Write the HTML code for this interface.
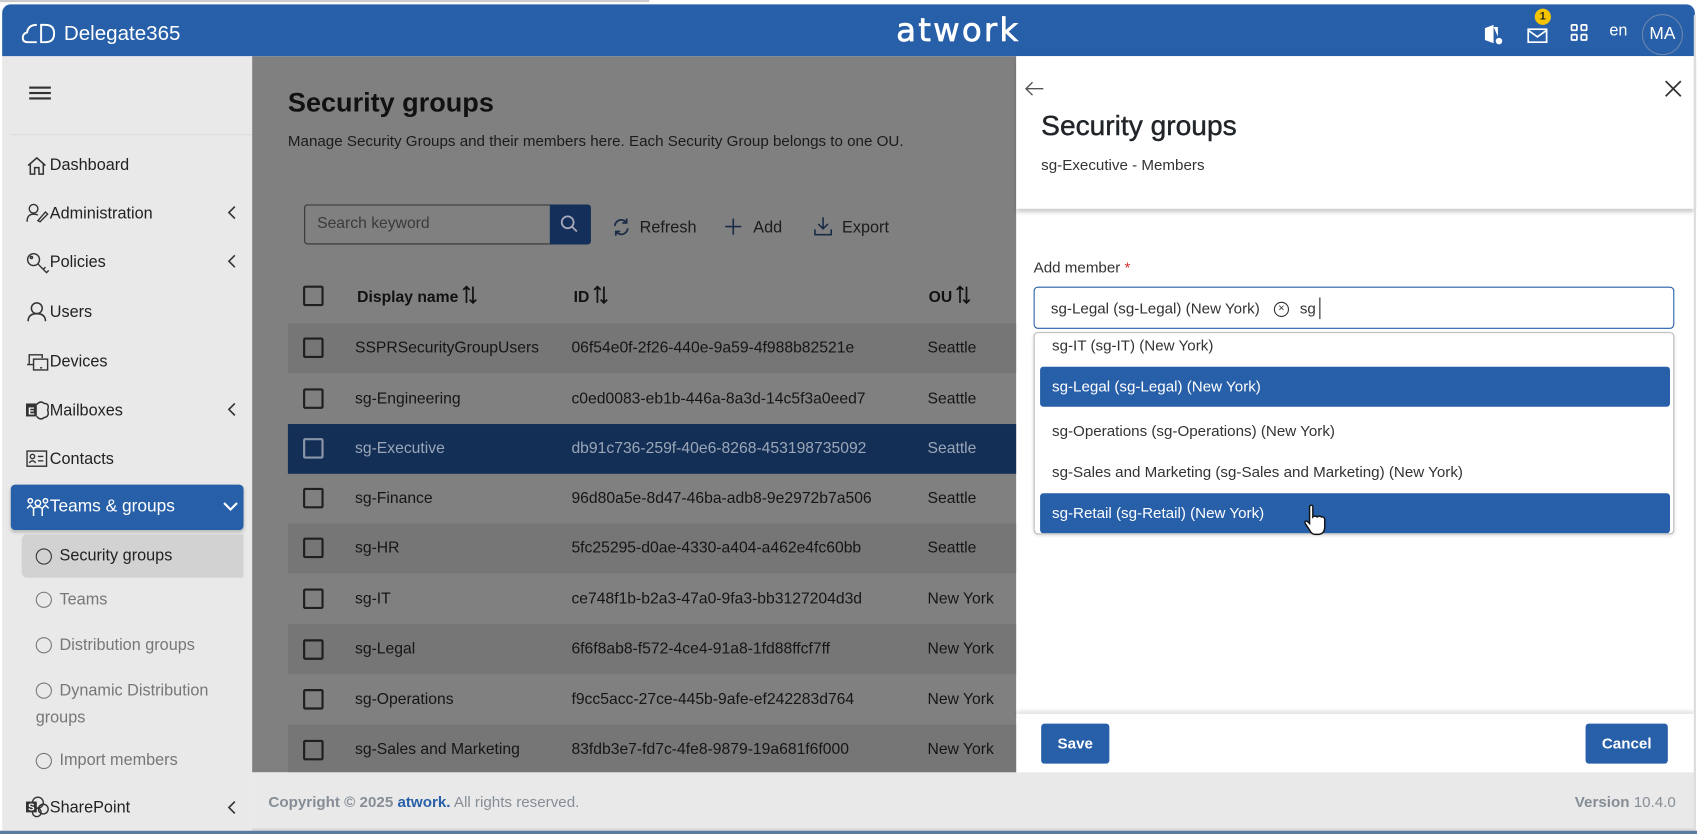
<!DOCTYPE html>
<html><head><meta charset="utf-8">
<style>
*{box-sizing:border-box;margin:0;padding:0}
html,body{width:1697px;height:834px;overflow:hidden;background:#fff}
#w{position:absolute;left:0;top:0;width:1568px;height:771px;transform:scale(1.0823,1.0817);transform-origin:0 0;font-family:"Liberation Sans",sans-serif;color:#212529;background:#fff}
.a{position:absolute;white-space:nowrap}
.hdr{left:2px;top:4px;width:1564px;height:48px;background:#275fa8;border-radius:8px 8px 0 0}
.side{left:2px;top:52px;width:231px;height:716px;background:#e9e9e9}
.main{left:233px;top:52px;width:706px;height:662px;background:#808080}
.foot{left:233px;top:714px;width:1333px;height:54px;background:#e9e9e9;border-bottom:2px solid #d7d7d7}
.nav{font-size:15px;color:#222;left:46px}
.ic{position:absolute;left:24px}
.chev{position:absolute;left:210px}
.row{position:absolute;left:266px;width:673px;height:46px;font-size:14.5px;color:#151515}
.row span{position:absolute;top:15px}
.cb{position:absolute;left:280px;width:19px;height:19px;border:2px solid #1f1f1f;border-radius:2px}
.panel{left:939px;top:52px;width:626px;height:662px;background:#fff}
.opt{position:absolute;left:5px;width:582px;height:37px;font-size:14px;padding:10px 11px;color:#333}
.opt.s{background:#275fa8;color:#fff;border-radius:3px}
.btn{position:absolute;background:#275fa8;color:#fff;font-weight:bold;font-size:14px;border-radius:3px;text-align:center;line-height:36px}
.srt{display:inline-block;vertical-align:-2px;margin-left:3px}
</style></head><body><div id="w">
<div class="a" style="left:0;top:0;width:600px;height:2px;background:#ccc"></div>
<div class="a hdr"></div>
<svg class="a" style="left:20px;top:21px" width="32" height="20" viewBox="0 0 32 20"><path d="M14 2 Q6 2 5 9 Q1 10 1 14 Q1 18 6 18 H14" fill="none" stroke="#fff" stroke-width="1.8"/><path d="M18 2 H22 Q30 2 30 10 Q30 18 22 18 H18 Z" fill="none" stroke="#fff" stroke-width="1.8"/></svg>
<div class="a" style="left:59px;top:21px;font-size:19px;color:#fff">Delegate365</div>
<div class="a" style="left:828px;top:11px;font-family:'DejaVu Sans',sans-serif;font-size:30px;color:#fff;letter-spacing:2px;-webkit-text-stroke:0.6px #fff">atwork</div>
<svg class="a" style="left:1369px;top:22px" width="20" height="20" viewBox="0 0 20 20"><path d="M3 4 L11 1 V18 L3 15 Z M11 3 H15 V12" fill="#fff"/><circle cx="16" cy="16" r="3" fill="#fff"/></svg>
<svg class="a" style="left:1411px;top:26px" width="19" height="14" viewBox="0 0 19 14"><rect x="1" y="1" width="17" height="12" fill="none" stroke="#fff" stroke-width="1.6"/><path d="M1 2 L9.5 8 L18 2" fill="none" stroke="#fff" stroke-width="1.6"/></svg>
<div class="a" style="left:1418px;top:8px;width:15px;height:15px;border-radius:50%;background:#f5c400;color:#222;font-size:10px;font-weight:bold;text-align:center;line-height:15px">1</div>
<svg class="a" style="left:1451px;top:22px" width="16" height="16" viewBox="0 0 16 16" fill="none" stroke="#fff" stroke-width="1.6"><rect x="1" y="1" width="5" height="5" rx="1"/><rect x="10" y="1" width="5" height="5" rx="1"/><rect x="1" y="10" width="5" height="5" rx="1"/><rect x="10" y="10" width="5" height="5" rx="1"/></svg>
<div class="a" style="left:1487px;top:20px;font-size:15px;color:#fff">en</div>
<div class="a" style="left:1517px;top:13px;width:38px;height:38px;border-radius:50%;border:1px solid #6b86ad;color:#fff;font-size:16px;text-align:center;line-height:36px">MA</div>

<div class="a side"></div>
<div class="a" style="left:27px;top:80px;width:20px;height:2px;background:#333;box-shadow:0 5px 0 #333,0 10px 0 #333"></div>
<div class="a" style="left:10px;top:124px;width:234px;height:1px;background:#ddd"></div>
<svg class="ic" style="top:144px" width="20" height="18" viewBox="0 0 20 18" fill="none" stroke="#333" stroke-width="1.4"><path d="M2 9 L10 2 L18 9 M4 7 V17 H8 V11 H12 V17 H16 V7"/></svg>
<div class="a nav" style="top:144px">Dashboard</div>
<svg class="ic" style="top:188px" width="22" height="18" viewBox="0 0 22 18" fill="none" stroke="#333" stroke-width="1.3"><circle cx="7" cy="5" r="4"/><path d="M1 17 Q1 10 7 10 Q10 10 11 11 M11 16 L18 8 L20 10 L13 17 Z"/></svg>
<div class="a nav" style="top:189px">Administration</div>
<svg class="chev" style="top:190px" width="8" height="13" viewBox="0 0 8 13"><path d="M7 1 L1.5 6.5 L7 12" fill="none" stroke="#333" stroke-width="1.5"/></svg>
<svg class="ic" style="top:233px" width="22" height="20" viewBox="0 0 22 20" fill="none" stroke="#333" stroke-width="1.3"><circle cx="7" cy="7" r="5.5"/><circle cx="5" cy="5" r="1"/><path d="M11 11 L19 19 L21 17 M16 16 L18 14"/></svg>
<div class="a nav" style="top:234px">Policies</div>
<svg class="chev" style="top:235px" width="8" height="13" viewBox="0 0 8 13"><path d="M7 1 L1.5 6.5 L7 12" fill="none" stroke="#333" stroke-width="1.5"/></svg>
<svg class="ic" style="top:279px" width="20" height="19" viewBox="0 0 20 19" fill="none" stroke="#333" stroke-width="1.4"><circle cx="10" cy="6" r="5"/><path d="M2 18 Q2 11 10 11 Q18 11 18 18"/></svg>
<div class="a nav" style="top:280px">Users</div>
<svg class="ic" style="top:326px" width="22" height="17" viewBox="0 0 22 17" fill="none" stroke="#333" stroke-width="1.3"><path d="M3 11 V2 H15 V5 M1 11 H7"/><rect x="7" y="6" width="13" height="10"/><path d="M13 14 H15"/></svg>
<div class="a nav" style="top:326px">Devices</div>
<svg class="ic" style="top:370px" width="22" height="19" viewBox="0 0 22 19"><path d="M10 4 Q13 0 17 3 Q22 3 20 9 Q22 15 17 16 Q13 19 10 15" fill="none" stroke="#333" stroke-width="1.4"/><rect x="0" y="3" width="10" height="12" fill="#333"/><text x="2" y="13" font-size="9" fill="#fff" font-family="Liberation Sans" font-weight="bold">E</text></svg>
<div class="a nav" style="top:371px">Mailboxes</div>
<svg class="chev" style="top:372px" width="8" height="13" viewBox="0 0 8 13"><path d="M7 1 L1.5 6.5 L7 12" fill="none" stroke="#333" stroke-width="1.5"/></svg>
<svg class="ic" style="top:416px" width="20" height="16" viewBox="0 0 20 16" fill="none" stroke="#333" stroke-width="1.3"><rect x="1" y="1" width="18" height="14"/><circle cx="6" cy="6" r="2"/><path d="M3 12 Q6 8 9 12 M11 6 H16 M11 10 H16"/></svg>
<div class="a nav" style="top:416px">Contacts</div>
<div class="a" style="left:10px;top:448px;width:215px;height:42px;background:#275fa8;border-radius:4px;box-shadow:0 2px 3px rgba(0,0,0,.2)"></div>
<svg class="a" style="left:24px;top:460px" width="22" height="18" viewBox="0 0 22 18" fill="none" stroke="#fff" stroke-width="1.4"><circle cx="4" cy="3" r="2"/><circle cx="11" cy="5" r="2.5"/><circle cx="18" cy="3" r="2"/><path d="M1 10 L4 7 L7 10 M7 17 V10 Q11 7 15 10 V17 M15 10 L18 7 L21 10"/></svg>
<div class="a" style="left:46px;top:460px;font-size:16px;color:#fff">Teams &amp; groups</div>
<svg class="a" style="left:206px;top:464px" width="14" height="9" viewBox="0 0 14 9"><path d="M1 1 L7 7 L13 1" fill="none" stroke="#fff" stroke-width="2"/></svg>
<div class="a" style="left:20px;top:494px;width:205px;height:40px;background:#d2d2d2;border-radius:5px 0 0 5px"></div>
<div class="a" style="left:33px;top:507px;width:15px;height:15px;border:1.5px solid #333;border-radius:50%"></div>
<div class="a" style="left:55px;top:505px;font-size:15px;color:#222">Security groups</div>
<div class="a" style="left:33px;top:547px;width:15px;height:15px;border:1.5px solid #777;border-radius:50%"></div>
<div class="a" style="left:55px;top:546px;font-size:15px;color:#777">Teams</div>
<div class="a" style="left:33px;top:589px;width:15px;height:15px;border:1.5px solid #777;border-radius:50%"></div>
<div class="a" style="left:55px;top:588px;font-size:15px;color:#777">Distribution groups</div>
<div class="a" style="left:33px;top:631px;width:15px;height:15px;border:1.5px solid #777;border-radius:50%"></div>
<div class="a" style="left:55px;top:630px;font-size:15px;color:#777">Dynamic Distribution</div>
<div class="a" style="left:33px;top:655px;font-size:15px;color:#777">groups</div>
<div class="a" style="left:33px;top:696px;width:15px;height:15px;border:1.5px solid #777;border-radius:50%"></div>
<div class="a" style="left:55px;top:694px;font-size:15px;color:#777">Import members</div>
<svg class="ic" style="top:736px" width="22" height="20" viewBox="0 0 22 20"><circle cx="11" cy="6" r="5" fill="none" stroke="#333" stroke-width="1.3"/><circle cx="16" cy="12" r="4.5" fill="none" stroke="#333" stroke-width="1.3"/><circle cx="10" cy="15" r="4" fill="none" stroke="#333" stroke-width="1.3"/><rect x="0" y="5" width="10" height="10" fill="#333"/><text x="2" y="13.5" font-size="9" fill="#fff" font-family="Liberation Sans" font-weight="bold">S</text></svg>
<div class="a nav" style="top:738px">SharePoint</div>
<svg class="chev" style="top:740px" width="8" height="13" viewBox="0 0 8 13"><path d="M7 1 L1.5 6.5 L7 12" fill="none" stroke="#333" stroke-width="1.5"/></svg>

<div class="a main"></div>
<div class="a" style="left:266px;top:81px;font-size:25px;font-weight:bold;color:#111">Security groups</div>
<div class="a" style="left:266px;top:122px;font-size:14px;color:#1b1b1b">Manage Security Groups and their members here. Each Security Group belongs to one OU.</div>
<div class="a" style="left:281px;top:189px;width:264px;height:37px;border:1px solid #333;border-radius:3px"></div>
<div class="a" style="left:293px;top:199px;font-size:14.5px;color:#3a3a3a">Search keyword</div>
<div class="a" style="left:508px;top:189px;width:38px;height:37px;background:#14305a;border-radius:0 3px 3px 0"></div>
<svg class="a" style="left:517px;top:198px" width="18" height="18" viewBox="0 0 18 18" fill="none" stroke="#aab" stroke-width="1.6"><circle cx="7.5" cy="7.5" r="5.5"/><path d="M11.5 11.5 L16 16"/></svg>
<svg class="a" style="left:566px;top:201px" width="16" height="18" viewBox="0 0 16 18" fill="none" stroke="#1a2b45" stroke-width="1.6"><path d="M2 8 A6 6 0 0 1 13 5 M13 1 V5 H9 M14 10 A6 6 0 0 1 3 13 M3 17 V13 H7"/></svg>
<div class="a" style="left:591px;top:202px;font-size:15px;color:#1b1b1b">Refresh</div>
<svg class="a" style="left:670px;top:202px" width="15" height="15" viewBox="0 0 15 15" stroke="#1a2b45" stroke-width="1.5"><path d="M7.5 0 V15 M0 7.5 H15"/></svg>
<div class="a" style="left:696px;top:202px;font-size:15px;color:#1b1b1b">Add</div>
<svg class="a" style="left:752px;top:200px" width="17" height="18" viewBox="0 0 17 18" fill="none" stroke="#1a2b45" stroke-width="1.5"><path d="M8.5 1 V11 M4 7 L8.5 11.5 L13 7 M1 12 V17 H16 V12"/></svg>
<div class="a" style="left:778px;top:202px;font-size:15px;color:#1b1b1b">Export</div>
<div class="cb" style="top:264px"></div>
<svg width="0" height="0" style="position:absolute"><defs><symbol id="so" viewBox="0 0 14 17"><path d="M4 16 V1 M1 4 L4 1 L7 4 M10 1 V16 M7 13 L10 16 L13 13" fill="none" stroke="#111" stroke-width="1.6"/></symbol></defs></svg>
<div class="a" style="left:330px;top:264px;font-size:14.5px;font-weight:bold;color:#111">Display name<svg class="srt" width="14" height="17"><use href="#so"/></svg></div>
<div class="a" style="left:530px;top:264px;font-size:14.5px;font-weight:bold;color:#111">ID<svg class="srt" width="14" height="17"><use href="#so"/></svg></div>
<div class="a" style="left:858px;top:264px;font-size:14.5px;font-weight:bold;color:#111">OU<svg class="srt" width="14" height="17"><use href="#so"/></svg></div>

<div class="row" style="top:299px;background:#767676"><span style="left:62px">SSPRSecurityGroupUsers</span><span style="left:262px">06f54e0f-2f26-440e-9a59-4f988b82521e</span><span style="left:591px">Seattle</span></div>
<div class="row" style="top:346px"><span style="left:62px">sg-Engineering</span><span style="left:262px">c0ed0083-eb1b-446a-8a3d-14c5f3a0eed7</span><span style="left:591px">Seattle</span></div>
<div class="row" style="top:392px;background:#142f56;color:#9aa6b8"><span style="left:62px">sg-Executive</span><span style="left:262px">db91c736-259f-40e6-8268-453198735092</span><span style="left:591px">Seattle</span></div>
<div class="row" style="top:438px"><span style="left:62px">sg-Finance</span><span style="left:262px">96d80a5e-8d47-46ba-adb8-9e2972b7a506</span><span style="left:591px">Seattle</span></div>
<div class="row" style="top:484px;background:#767676"><span style="left:62px">sg-HR</span><span style="left:262px">5fc25295-d0ae-4330-a404-a462e4fc60bb</span><span style="left:591px">Seattle</span></div>
<div class="row" style="top:531px"><span style="left:62px">sg-IT</span><span style="left:262px">ce748f1b-b2a3-47a0-9fa3-bb3127204d3d</span><span style="left:591px">New York</span></div>
<div class="row" style="top:577px;background:#767676"><span style="left:62px">sg-Legal</span><span style="left:262px">6f6f8ab8-f572-4ce4-91a8-1fd88ffcf7ff</span><span style="left:591px">New York</span></div>
<div class="row" style="top:624px"><span style="left:62px">sg-Operations</span><span style="left:262px">f9cc5acc-27ce-445b-9afe-ef242283d764</span><span style="left:591px">New York</span></div>
<div class="row" style="top:670px;background:#767676;height:44px"><span style="left:62px">sg-Sales and Marketing</span><span style="left:262px">83fdb3e7-fd7c-4fe8-9879-19a681f6f000</span><span style="left:591px">New York</span></div>
<div class="cb" style="top:312px"></div><div class="cb" style="top:359px"></div><div class="cb" style="top:405px;border-color:#8a96a8"></div><div class="cb" style="top:451px"></div><div class="cb" style="top:497px"></div><div class="cb" style="top:544px"></div><div class="cb" style="top:591px"></div><div class="cb" style="top:637px"></div><div class="cb" style="top:684px"></div>

<div class="a panel"></div>
<div class="a" style="left:939px;top:52px;width:626px;height:141px;background:#fff;box-shadow:0 3px 4px rgba(0,0,0,.22)"></div>
<svg class="a" style="left:947px;top:75px" width="18" height="14" viewBox="0 0 18 14" fill="none" stroke="#555" stroke-width="1.3"><path d="M17 7 H1 M7 1 L1 7 L7 13"/></svg>
<svg class="a" style="left:1538px;top:74px" width="16" height="16" viewBox="0 0 16 16" stroke="#333" stroke-width="1.6"><path d="M1 1 L15 15 M15 1 L1 15"/></svg>
<div class="a" style="left:962px;top:101px;font-size:26px;color:#212529;-webkit-text-stroke:0.4px #212529">Security groups</div>
<div class="a" style="left:962px;top:144px;font-size:14px;color:#333">sg-Executive - Members</div>
<div class="a" style="left:955px;top:239px;font-size:14px;color:#333">Add member <span style="color:#d33">*</span></div>
<div class="a" style="left:955px;top:265px;width:592px;height:39px;border:1px solid #275fa8;border-radius:4px"></div>
<div class="a" style="left:971px;top:277px;font-size:14px;color:#333">sg-Legal (sg-Legal) (New York)</div>
<div class="a" style="left:1177px;top:279px;width:14px;height:14px;border:1.3px solid #333;border-radius:50%;font-size:10px;line-height:11px;text-align:center;color:#333">×</div>
<div class="a" style="left:1201px;top:277px;font-size:14px;color:#333">sg</div>
<div class="a" style="left:1219px;top:275px;width:1px;height:20px;background:#222"></div>
<div class="a" style="left:955px;top:307px;width:592px;height:187px;border:1px solid #bbb;border-radius:4px;background:#fff;overflow:hidden;box-shadow:0 1px 3px rgba(0,0,0,.15)">
<div class="opt" style="top:0;padding-top:3px">sg-IT (sg-IT) (New York)</div>
<div class="opt s" style="top:31px">sg-Legal (sg-Legal) (New York)</div>
<div class="opt" style="top:72px">sg-Operations (sg-Operations) (New York)</div>
<div class="opt" style="top:110px">sg-Sales and Marketing (sg-Sales and Marketing) (New York)</div>
<div class="opt s" style="top:148px">sg-Retail (sg-Retail) (New York)</div>
</div>
<svg class="a" style="left:1204px;top:466px" width="24" height="30" viewBox="0 0 24 30"><path d="M6 2 Q8 0 9 2 V12 Q11 10 13 12 Q15 10 17 12 Q19 11 20 14 V21 Q20 27 15 28 H11 Q8 28 6 24 L2 18 Q1 15 4 16 L6 18 Z" fill="#fff" stroke="#111" stroke-width="1.3"/></svg>
<div class="a" style="left:939px;top:660px;width:626px;height:3px;box-shadow:0 -2px 4px rgba(0,0,0,.18)"></div>
<div class="btn" style="left:962px;top:669px;width:63px;height:37px">Save</div>
<div class="btn" style="left:1465px;top:669px;width:76px;height:37px">Cancel</div>

<div class="a foot"></div>
<div class="a" style="left:248px;top:733px;font-size:14px;color:#858d96"><b>Copyright © 2025 <span style="color:#275fa8">atwork.</span></b> All rights reserved.</div>
<div class="a" style="left:1455px;top:733px;font-size:14px;color:#858d96"><b>Version</b> 10.4.0</div>
<div class="a" style="left:1565px;top:14px;width:2px;height:756px;background:#ddd"></div>
<div class="a" style="left:0;top:768px;width:1568px;height:3px;background:#5a7aa0"></div>
</div></body></html>
